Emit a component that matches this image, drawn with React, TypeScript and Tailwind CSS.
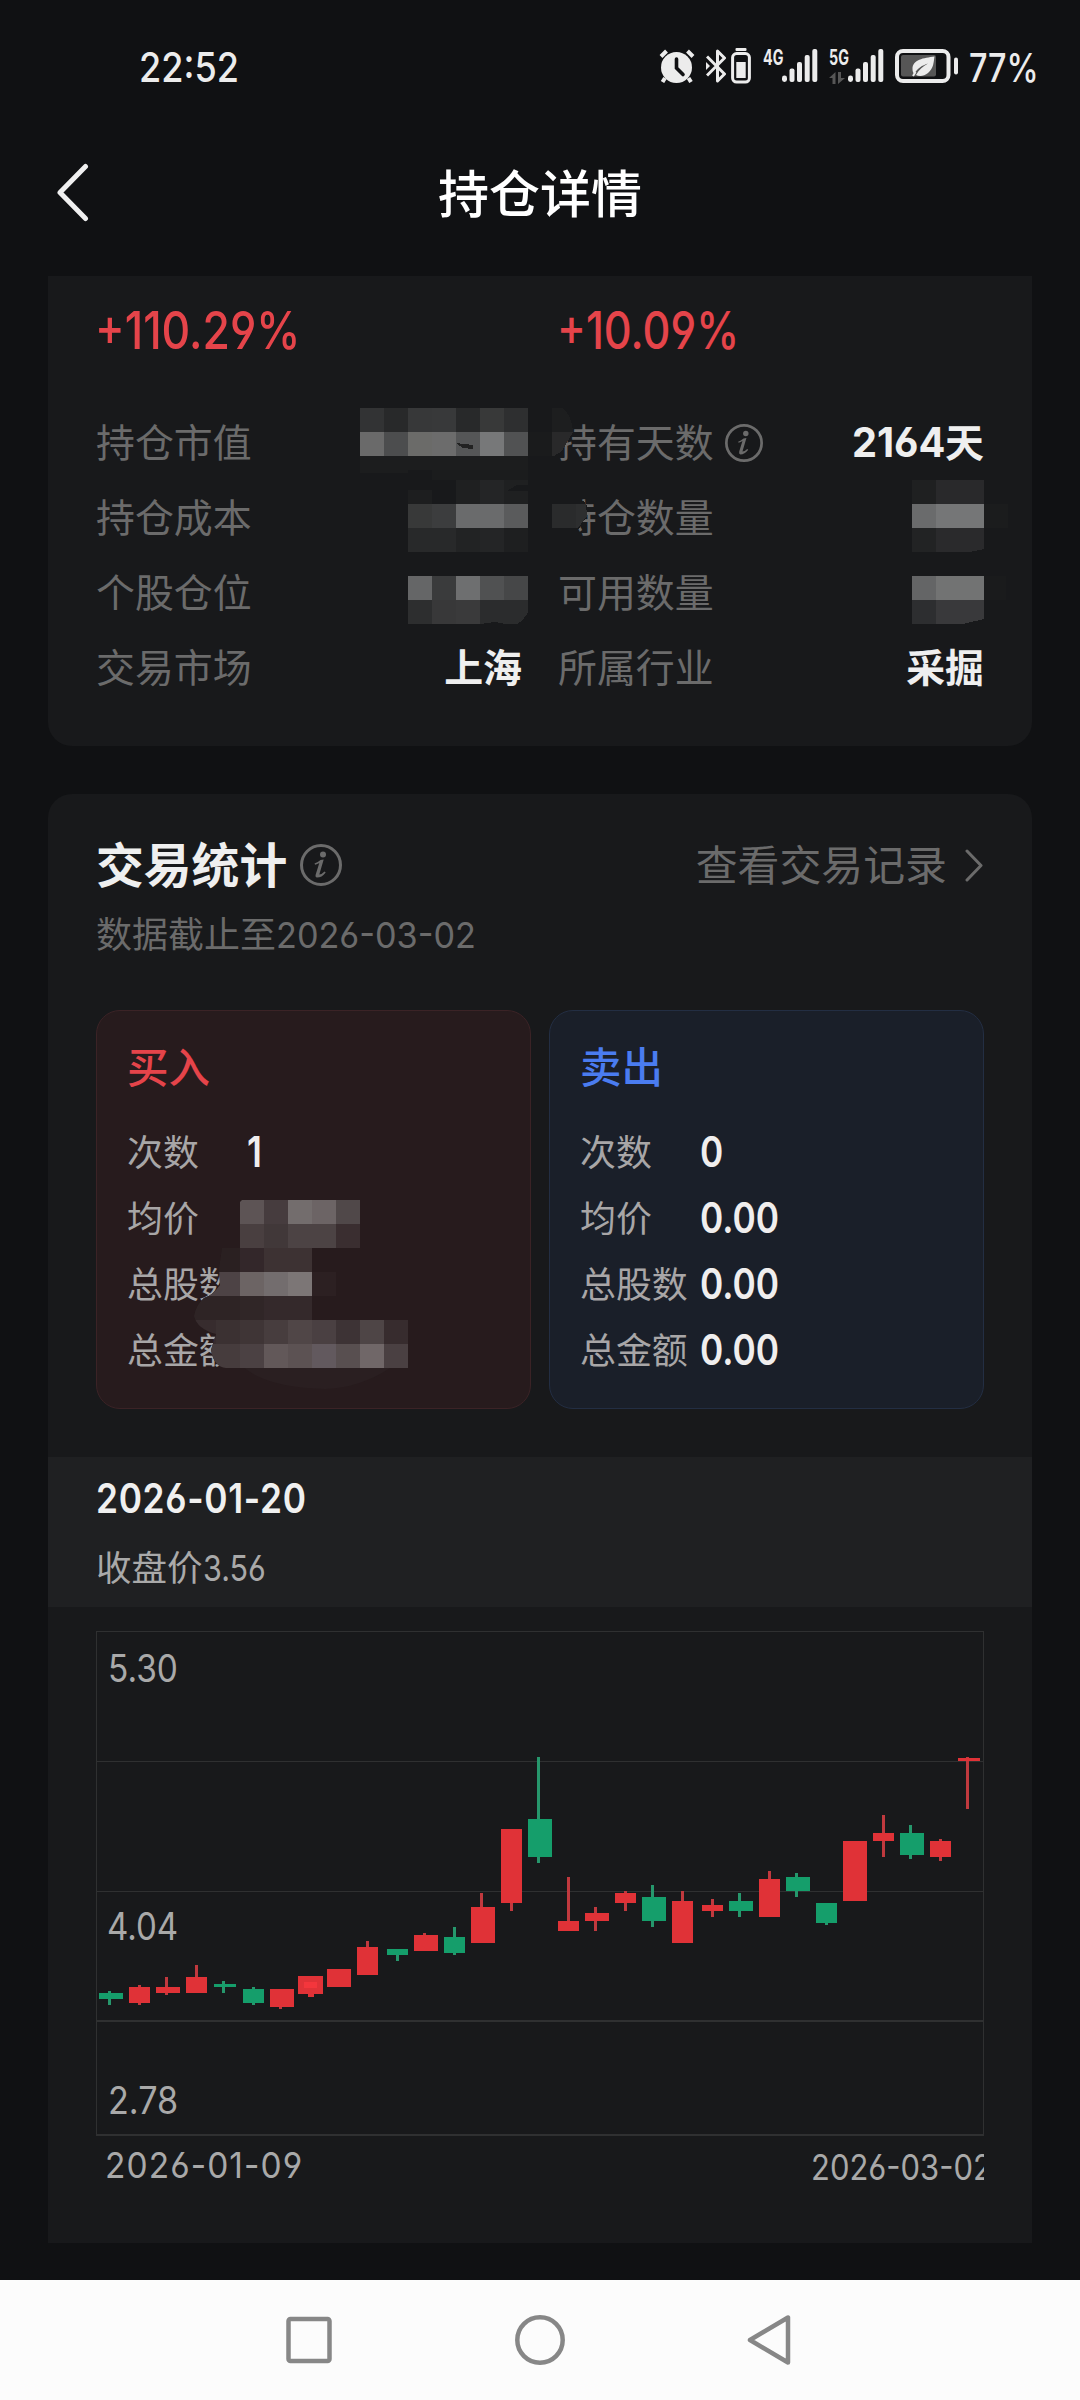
import type { ReactNode } from "react";
import clsx from "clsx";

type Cell = [x: number, y: number, w: number, h: number, fill: string];

// x, width, body top, body bottom, wick x, wick top, wick bottom
type Candle = ["r" | "g", number, number, number, number, number, number, number];

const candles: Candle[] = [
  ["g", 99, 24, 1993, 1999, 108, 1991, 2005],
  ["r", 129, 21, 1987, 2003, 138, 1985, 2005],
  ["r", 156, 24, 1987, 1993, 165, 1977, 1995],
  ["r", 186, 21, 1977, 1993, 195, 1965, 1993],
  ["g", 214, 22, 1983.5, 1986.5, 222, 1981, 1993],
  ["g", 243, 21, 1989, 2003, 252, 1987, 2005],
  ["r", 270, 24, 1989, 2007, 279, 1989, 2009],
  ["r", 298, 25, 1976, 1994, 309, 1976, 1997],
  ["r", 327, 24, 1969, 1987, 336, 1969, 1987],
  ["r", 357, 21, 1947, 1975, 366, 1941, 1975],
  ["g", 387, 21, 1949, 1955, 396, 1949, 1961],
  ["r", 414, 24, 1935, 1951, 423, 1933, 1951],
  ["g", 444, 21, 1937, 1953, 453, 1927, 1955],
  ["r", 471, 24, 1907, 1943, 480, 1893, 1943],
  ["r", 501, 21, 1829, 1903, 510, 1829, 1911],
  ["g", 528, 24, 1819, 1857, 537, 1757, 1863],
  ["r", 558, 21, 1921, 1931, 567, 1877, 1931],
  ["r", 585, 24, 1913, 1921, 594, 1907, 1931],
  ["r", 615, 21, 1893, 1903, 624, 1891, 1911],
  ["g", 642, 24, 1897, 1921, 651, 1885, 1927],
  ["r", 672, 21, 1901, 1943, 681, 1891, 1943],
  ["r", 702, 21, 1905, 1911, 711, 1899, 1917],
  ["g", 729, 24, 1901, 1911, 738, 1893, 1917],
  ["r", 759, 21, 1879, 1917, 768, 1871, 1917],
  ["g", 786, 24, 1877, 1891, 795, 1873, 1897],
  ["g", 816, 21, 1903, 1923, 825, 1903, 1925],
  ["r", 843, 24, 1841, 1901, 852, 1841, 1901],
  ["r", 873, 21, 1833, 1841, 882, 1815, 1857],
  ["g", 900, 24, 1833, 1855, 909, 1825, 1859],
  ["r", 930, 21, 1841, 1857, 939, 1839, 1861],
  ["r", 958, 22, 1757.5, 1760.5, 966, 1757, 1809],
];

const holdingCells: Cell[] = [
  [360, 408, 24, 24, "#323334"],
  [384, 408, 24, 24, "#28292a"],
  [408, 408, 24, 24, "#373839"],
  [432, 408, 24, 24, "#38393a"],
  [456, 408, 24, 24, "#28292a"],
  [480, 408, 24, 24, "#383939"],
  [504, 408, 24, 24, "#2e2f30"],
  [360, 432, 24, 24, "#6a6a6a"],
  [384, 432, 24, 24, "#4c4d4e"],
  [408, 432, 24, 24, "#6b6b69"],
  [432, 432, 24, 24, "#6c6c6c"],
  [456, 432, 24, 24, "#555657"],
  [480, 432, 24, 24, "#777879"],
  [504, 432, 24, 24, "#515253"],
  [528, 432, 24, 24, "#1a1b1c"],
  [360, 456, 48, 17, "#1c1d1e"],
  [408, 456, 120, 14, "#1c1d1e"],
  [432, 470, 96, 10, "#1b1c1d"],
  [408, 490, 24, 14, "#1d1e1f"],
  [456, 480, 24, 24, "#1f2021"],
  [480, 480, 24, 24, "#242526"],
  [504, 480, 24, 24, "#1f2021"],
  [408, 504, 24, 24, "#383939"],
  [432, 504, 24, 24, "#3c3d3e"],
  [456, 504, 48, 24, "#6a6b6c"],
  [504, 504, 24, 24, "#5a5b5c"],
  [408, 528, 48, 24, "#28292a"],
  [456, 528, 24, 24, "#222324"],
  [480, 528, 24, 24, "#242526"],
  [504, 528, 24, 24, "#1e1f20"],
  [408, 576, 24, 24, "#656667"],
  [432, 576, 24, 24, "#3a3b3c"],
  [456, 576, 24, 24, "#6e6f70"],
  [480, 576, 24, 24, "#505152"],
  [504, 576, 24, 24, "#464748"],
  [408, 600, 24, 24, "#2d2e2f"],
  [432, 600, 24, 24, "#383839"],
  [456, 600, 24, 24, "#3a3a3b"],
  [912, 480, 24, 24, "#1f2021"],
  [936, 480, 48, 24, "#29292b"],
  [912, 504, 24, 24, "#6a6b6c"],
  [936, 504, 48, 24, "#757677"],
  [984, 504, 24, 24, "#1b1c1d"],
  [912, 528, 24, 24, "#222324"],
  [912, 576, 24, 24, "#646566"],
  [936, 576, 48, 24, "#727373"],
  [984, 576, 22, 24, "#1a1b1c"],
  [912, 600, 24, 24, "#2d2e30"],
];

const buyCells: Cell[] = [
  [240, 1200, 24, 24, "#5d5455"],
  [264, 1200, 24, 24, "#463c3e"],
  [288, 1200, 24, 24, "#736d6d"],
  [312, 1200, 24, 24, "#6c6465"],
  [336, 1200, 24, 24, "#504849"],
  [240, 1224, 24, 24, "#493f40"],
  [264, 1224, 24, 24, "#413839"],
  [288, 1224, 48, 24, "#4c4344"],
  [336, 1224, 24, 24, "#3a2e30"],
  [192, 1248, 48, 24, "#2a2021"],
  [240, 1248, 24, 24, "#33272a"],
  [264, 1248, 48, 24, "#3d3233"],
  [192, 1272, 48, 24, "#4d4345"],
  [240, 1272, 24, 24, "#6c6464"],
  [264, 1272, 24, 24, "#736d6e"],
  [288, 1272, 24, 24, "#7c7676"],
  [312, 1272, 24, 24, "#2c2022"],
  [192, 1296, 48, 24, "#2e2425"],
  [240, 1296, 24, 24, "#302627"],
  [264, 1296, 48, 24, "#34292b"],
  [192, 1320, 24, 24, "#372c2e"],
  [216, 1320, 24, 24, "#3b3132"],
  [240, 1320, 24, 24, "#3f3536"],
  [264, 1320, 24, 24, "#473d3e"],
  [288, 1320, 24, 24, "#504647"],
  [312, 1320, 24, 24, "#4a4042"],
  [336, 1320, 24, 24, "#3d3335"],
  [360, 1320, 24, 24, "#4e4546"],
  [384, 1320, 24, 24, "#372c2e"],
  [192, 1344, 48, 24, "#463c3d"],
  [240, 1344, 24, 24, "#4b4143"],
  [264, 1344, 24, 24, "#625859"],
  [288, 1344, 24, 24, "#5c5253"],
  [312, 1344, 24, 24, "#62595e"],
  [336, 1344, 24, 24, "#584f50"],
  [360, 1344, 24, 24, "#706768"],
  [384, 1344, 24, 24, "#4a4042"],
];

const Cells = ({ cells }: { cells: Cell[] }) => (
  <>
    {cells.map(([x, y, w, h, fill]) => (
      <rect key={`${x}-${y}`} x={x} y={y} width={w} height={h} fill={fill} />
    ))}
  </>
);

/* latin digits, squeezed a little */
const Num = ({ children, className }: { children: ReactNode; className?: string }) => (
  <span
    className={clsx(
      "inline-block whitespace-nowrap leading-none font-['Inter',sans-serif] [font-feature-settings:'cv03','cv04']",
      className
    )}
  >
    {children}
  </span>
);

const InfoIcon = ({ className }: { className?: string }) => (
  <svg viewBox="0 0 42 42" fill="none" className={className}>
    <circle cx="21" cy="21" r="19.5" stroke="#6b6b6b" strokeWidth="3" />
    <circle cx="23" cy="10.5" r="3" fill="#6b6b6b" />
    <path d="M14.5 19.5q3-1 6-3.6l3.2-.4-4.4 15q2.400 0 5.200-3l1.200.9q-4 5.200-8.700 5.200-2-.3-1.300-3.100l3.600-11.600q-2 1.300-4.200 1.800z" fill="#6b6b6b" />
  </svg>
);

const Bars = () => (
  <svg viewBox="0 0 36 34" className="h-[34px] w-[36px]" fill="#ececec">
    <rect x="0" y="26.500" width="5" height="6.500" rx="2.400" />
    <rect x="7.500" y="19.500" width="5" height="13.500" rx="2" />
    <rect x="15" y="13" width="5" height="20" rx="2" />
    <rect x="22.700" y="6" width="5" height="27" rx="2" />
    <rect x="30.300" y="0" width="5" height="33" rx="2" />
  </svg>
);

const StatusBar = () => (
  <div className="flex h-[132px] items-center pl-[139px]">
    <Num className="relative top-px w-[100px] origin-left scale-x-[0.88] text-[41px] font-medium text-[#ececec]">22:52</Num>
    <div className="ml-[420px] flex items-center">
      <svg viewBox="0 0 36 34" className="h-[34px] w-[36px]" fill="none">
        <circle cx="17.500" cy="18.500" r="15.500" fill="#ececec" />
        <path d="M2 7.500 7.500 2M28.500 2 34 7.500M6 29l-2.500 4M29.500 29l2.500 4" stroke="#ececec" strokeWidth="4" />
        <path d="M17.500 10v9l6.500 6.500" stroke="#101113" strokeWidth="3.600" strokeLinecap="round" />
      </svg>
      <svg viewBox="0 0 22 36" className="ml-[11px] h-9 w-[22px]" fill="none" stroke="#ececec" strokeWidth="3">
        <path d="M1 8.500 18.500 26 11.500 33V3l7 7L1 27.500" strokeLinejoin="round" />
        <path d="m0 14 4 4-4 4z" fill="#ececec" stroke="none" />
      </svg>
      <svg viewBox="0 0 20 36" className="ml-[3px] h-9 w-5" fill="none">
        <rect x="4.500" y="0" width="11" height="3" rx="1" fill="#ececec" />
        <rect x="1.600" y="5.600" width="16.800" height="28.500" rx="4" stroke="#ececec" strokeWidth="3" />
        <rect x="5.300" y="14" width="9.400" height="16" fill="#ececec" />
      </svg>
      <div className="ml-[12px] h-9 w-[19px]">
        <Num className="relative -top-[2px] block origin-left scale-x-[0.68] text-[21px] font-bold text-[#ececec]">4G</Num>
      </div>
      <Bars />
      <div className="ml-[11px] h-9 w-[19px]">
        <Num className="relative -top-[2px] block origin-left scale-x-[0.68] text-[21px] font-bold text-[#ececec]">5G</Num>
        <svg viewBox="0 0 16 13" className="h-[13px] w-4" fill="#565656">
          <path d="M6.500 0v12H3.500V6H0zM9 0h3v6h4L9 12z" />
        </svg>
      </div>
      <Bars />
      <svg viewBox="0 0 64 34" className="ml-[11px] h-[34px] w-16" fill="none">
        <rect x="2" y="2" width="51.500" height="30" rx="6" stroke="#ececec" strokeWidth="4" />
        <rect x="6" y="6" width="35" height="21.500" rx="2" fill="#565656" />
        <rect x="59" y="8.500" width="4" height="17" rx="2" fill="#ececec" />
        <path d="M39.500 7.500c-11 1.500-22 3-22 12.500 0 2 .5 3.500 1.500 5 4-6 8-8.500 14-10.500-5 3-9 6-12 11.500 3 1.500 8 1.500 12-2 6-5 5.500-11 6.500-16.500z" fill="#ececec" />
        <path d="m20.500 23-2.500 4" stroke="#ececec" strokeWidth="2" />
      </svg>
      <Num className="relative top-px ml-[10px] origin-left scale-x-[0.83] text-[39px] font-medium text-[#ececec]">77%</Num>
    </div>
  </div>
);

const Header = () => (
  <div className="relative flex h-[144px] items-start justify-center">
    <svg viewBox="0 0 36 60" className="absolute left-[54px] top-[31px] h-[60px] w-9" fill="none">
      <path d="M31.500 3.500 6 29.500l25.500 26" stroke="#f0f0f0" strokeWidth="5" strokeLinecap="round" strokeLinejoin="round" />
    </svg>
    <h1 className="h-[118px] text-[51px] font-medium leading-[118px] text-white">持仓详情</h1>
  </div>
);

const StatRow = ({ label, info, children }: { label: string; info?: boolean; children?: ReactNode }) => (
  <div className="flex h-[75px] items-center justify-between text-[38.900px] leading-[75px]">
    <span className="flex items-center text-[#6b6b6b]">
      {label}
      {info && <InfoIcon className="relative top-[2px] ml-[11px] size-[38px]" />}
    </span>
    <span className="whitespace-nowrap font-bold text-[#efefef]">{children}</span>
  </div>
);

const HoldingCard = () => (
  <section className="relative mx-12 h-[470px] rounded-b-3xl bg-[#18191b] px-12">
    <div className="-ml-px grid h-[110px] grid-cols-[462px_1fr] items-center text-[52px] font-medium text-[#e5444a]">
      <Num className="origin-left scale-x-[0.855]">+110.29%</Num>
      <Num className="origin-left scale-x-[0.832]">+10.09%</Num>
    </div>
    <div className="mt-[17px] grid grid-cols-[426px_426px] justify-between">
      <StatRow label="持仓市值" />
      <StatRow label="持有天数" info>
        <Num className="origin-right scale-x-[0.97] text-[41px]">2164</Num>天
      </StatRow>
      <StatRow label="持仓成本" />
      <StatRow label="持仓数量" />
      <StatRow label="个股仓位" />
      <StatRow label="可用数量" />
      <StatRow label="交易市场">上海</StatRow>
      <StatRow label="所属行业">采掘</StatRow>
    </div>
    {/* hidden amounts */}
    <svg viewBox="48 276 984 470" className="absolute inset-0 h-[470px] w-[984px]" shapeRendering="crispEdges">
      <path d="M528 408h34q10 7 11 24l-11 19-8 5h-26zM528 492h40q16 7 19 14v10l-9 14-26 18h-24z" fill="#18191b" />
      <Cells cells={holdingCells} />
      <path d="M552 408h10q10 7 11 24h-21z" fill="#1d1e1f" />
      <path d="M552 432h21l-11 19-8 5h-2z" fill="#29292a" />
      <path d="M552 504h24v24h-24z" fill="#2a2b2c" />
      <path d="M576 504h10l1 12-9 12h-2z" fill="#2d2e2f" />
      <path d="M480 600h48v12q-4 8-11 12h-12l-10-2-15 2z" fill="#2b2c2d" />
      <path d="M936 528h48v21l-14 3h-34z" fill="#2a2a2c" />
      <path d="M936 600h48v19l-21 5h-27z" fill="#39393b" />
      <path d="M456 443l17 2v4l-10-1z" fill="#222" />
      <path d="M507 491l10-6h11v6z" fill="#18191b" />
    </svg>
  </section>
);

const tradeRows = ["次数", "均价", "总股数", "总金额"];

const TradeBox = ({ title, values, sell }: { title: string; values: string[]; sell?: boolean }) => (
  <div
    className={clsx(
      "h-[399px] w-[435px] rounded-3xl border pl-[30px] pt-[26px]",
      sell ? "border-[#232e43] bg-[#1a1f29]" : "border-[#3b2326] bg-[#271b1d]"
    )}
  >
    <div className={clsx("h-[56px] text-[41.500px] font-medium leading-[56px]", sell ? "text-[#4a7cf0]" : "text-[#e5444a]")}>
      {title}
    </div>
    <div className="mt-[24px]">
      {tradeRows.map((row, i) => (
        <div key={row} className="flex h-[66px] items-center">
          <span className="w-[120px] text-[35.900px] leading-[66px] text-[#a8a6a7]">{row}</span>
          <Num className="relative top-[2px] origin-left scale-x-[0.84] text-[42px] font-semibold text-[#f0eeee]">{values[i]}</Num>
        </div>
      ))}
    </div>
  </div>
);

const Chart = () => (
  <div className="relative mx-12 mt-6 h-[505px] w-[889px]">
    <svg viewBox="96 1631 889 505" className="h-[505px] w-[889px]" shapeRendering="crispEdges">
      <g fill="#2f3031">
        <rect x="96" y="1631" width="888" height="1" />
        <rect x="96" y="1761" width="888" height="1" />
        <rect x="96" y="1891" width="888" height="1" />
        <rect x="96" y="2020" width="888" height="2" />
        <rect x="96" y="2134" width="888" height="2" />
        <rect x="96" y="1631" width="1" height="505" />
        <rect x="983" y="1631" width="1" height="505" />
      </g>
      {candles.map(([c, x, w, top, bottom, wx, wt, wb]) => (
        <g key={x}>
          <rect x={wx} y={wt} width={3} height={wb - wt} fill={c === "r" ? "#c0393e" : "#26976c"} />
          <rect x={x} y={top} width={w} height={bottom - top} fill={c === "r" ? "#e03237" : "#159e6b"} />
        </g>
      ))}
      <rect x="304" y="1982" width="13" height="6" fill="#f4363c" />
      <rect x="308" y="1994" width="6" height="3" fill="#e03237" />
    </svg>
    <Num className="absolute left-[12px] top-[18px] origin-left scale-x-[0.88] text-[38px] text-[#a9a9a9]">5.30</Num>
    <Num className="absolute left-[11px] top-[276px] origin-left scale-x-[0.87] text-[38px] text-[#a9a9a9]">4.04</Num>
    <Num className="absolute left-[12px] top-[450px] origin-left scale-x-[0.9] text-[38px] text-[#a9a9a9]">2.78</Num>
  </div>
);

const TradeCard = () => (
  <section className="mx-12 mt-12 h-[1449px] rounded-t-3xl bg-[#18191b]">
    <div className="flex h-[142px] items-center px-12">
      <h2 className="relative -top-[2px] text-[47.800px] font-bold text-[#efefef]">交易统计</h2>
      <InfoIcon className="ml-[13px] size-[42px]" />
      <span className="relative -top-[2px] ml-auto text-[41.900px] text-[#6b6b6b]">查看交易记录</span>
      <svg viewBox="0 0 20 34" className="ml-[17px] h-[34px] w-5" fill="none">
        <path d="M3 3l14 14.500L3 32" stroke="#6b6b6b" strokeWidth="3" strokeLinecap="round" strokeLinejoin="round" />
      </svg>
    </div>
    <div className="-mt-[22px] h-[36px] whitespace-nowrap px-12 text-[36px] leading-[36px] text-[#6b6b6b]">
      数据截止至<Num className="origin-left scale-x-[0.951]">2026-03-02</Num>
    </div>
    <div className="mt-[60px] flex gap-[18px] px-12">
      <TradeBox title="买入" values={["1"]} />
      <TradeBox title="卖出" values={["0", "0.00", "0.00", "0.00"]} sell />
    </div>
    <div className="mt-[48px] h-[150px] bg-[#1f2022] px-12 pt-[21px]">
      <Num className="block origin-left scale-x-[0.86] text-[41px] font-semibold tracking-[0.8px] text-[#f0f0f0]">2026-01-20</Num>
      <div className="mt-[27px] text-[35.500px] leading-[40px] text-[#a9a9a9]">
        收盘价<Num className="origin-left scale-x-[0.86]">3.56</Num>
      </div>
    </div>
    <Chart />
    <div className="mx-12 flex w-[888px] justify-between overflow-hidden pt-[11px] text-[36px] text-[#a9a9a9]">
      <Num className="ml-[9px] origin-left scale-x-[0.93] tracking-[1.15px]">2026-01-09</Num>
      <div className="w-[173px] leading-none">
        <Num className="relative -top-px block w-max origin-left scale-x-[0.885] text-[35px]">2026-03-02</Num>
      </div>
    </div>
  </section>
);

const NavBar = () => (
  <nav className="mt-[37px] flex h-[120px] items-center bg-[#fcfcfc] pl-[284px]">
    <svg viewBox="0 0 50 54" className="h-[54px] w-[50px]" fill="none" stroke="#878787" strokeWidth="4.500">
      <rect x="4.500" y="6" width="41" height="42" rx="2" />
    </svg>
    <svg viewBox="0 0 54 54" className="ml-[179px] h-[54px] w-[54px]" fill="none" stroke="#878787" strokeWidth="4.500">
      <circle cx="27" cy="27" r="22.700" />
    </svg>
    <svg viewBox="0 0 50 54" className="ml-[177px] h-[54px] w-[50px]" fill="none" stroke="#878787" strokeWidth="4.500">
      <path d="M44 4.500v45L6 27z" strokeLinejoin="round" />
    </svg>
  </nav>
);

export default function App() {
  return (
    <div className="relative h-[2400px] w-[1080px] overflow-hidden bg-[#101113] font-['Noto_Sans_CJK_SC',sans-serif]">
      <StatusBar />
      <Header />
      <HoldingCard />
      <TradeCard />
      <NavBar />
      {/* hidden buy figures, drawn over the labels */}
      <svg viewBox="96 1180 436 220" className="absolute left-[96px] top-[1180px] h-[220px] w-[436px]">
        <clipPath id="smear">
          <path d="M242 1200H364V1248H336V1320H408V1368H226Q214 1367 211 1350L216 1334Q197 1329 194 1316Q196 1305 204 1298Q212 1296 220 1285L219 1268L222 1248H240V1202z" />
        </clipPath>
        <path d="M262 1368H390Q360 1388 325 1389Q280 1388 255 1375L244 1368z" fill="#2a1f21" />
        <g clipPath="url(#smear)" shapeRendering="crispEdges">
          <rect x="192" y="1248" width="220" height="120" fill="#271b1d" />
          <Cells cells={buyCells} />
        </g>
      </svg>
    </div>
  );
}
